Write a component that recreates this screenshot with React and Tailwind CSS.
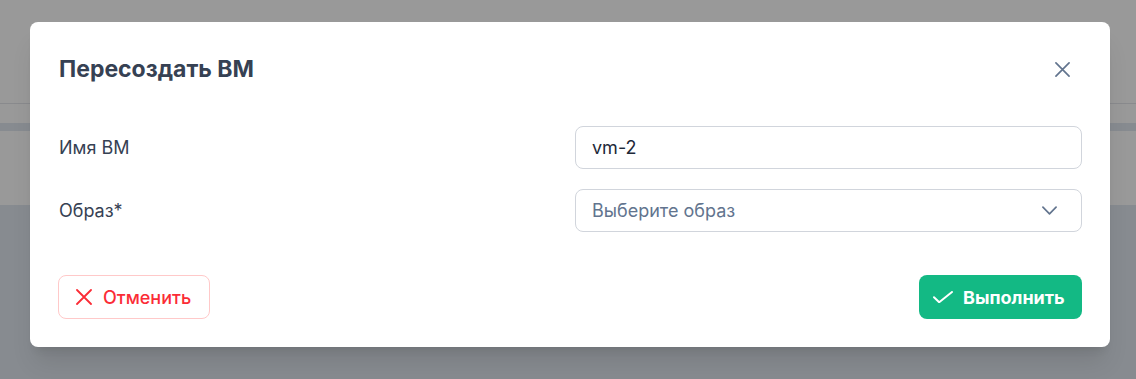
import React from "react";

function XIcon({ className }) {
  return (
    <svg viewBox="0 0 16 16" className={className} fill="none" stroke="currentColor" strokeWidth="1.8" strokeLinecap="round">
      <path d="M1 1l14 14M15 1L1 15" />
    </svg>
  );
}

function CheckIcon({ className }) {
  return (
    <svg viewBox="0 0 20 12" className={className} fill="none" stroke="currentColor" strokeWidth="2" strokeLinecap="round" strokeLinejoin="round">
      <path d="M1 6.2l5.2 5L19 1" />
    </svg>
  );
}

function ChevronIcon({ className }) {
  return (
    <svg viewBox="0 0 16 9" className={className} fill="none" stroke="currentColor" strokeWidth="1.8" strokeLinecap="round" strokeLinejoin="round">
      <path d="M1 1l7 7 7-7" />
    </svg>
  );
}

function Backdrop() {
  return (
    <div className="h-[379px] w-full flex flex-col bg-[#e2e8f0]">
      <div className="h-[104px] bg-white border-b border-[#e5e7eb] flex justify-center">
        <div className="mt-[17px] ml-[20px] flex gap-[40px] text-[18px] font-medium text-gray-800">
          <span>1</span>
          <span>2 3</span>
        </div>
      </div>
      <div className="h-[19px] bg-white" />
      <div className="h-[8px] bg-[#e2e8f0]" />
      <div className="h-[74px] bg-white" />
      <div className="flex-1 bg-[#e2e8f0]" />
    </div>
  );
}

export default function App() {
  return (
    <div
      className="relative w-full h-[379px] overflow-hidden"
      style={{ fontFamily: "Inter, 'Noto Sans', sans-serif" }}
    >
      <Backdrop />
      <div className="absolute inset-0 bg-black/40" />
      <div className="absolute left-[30px] top-[22px] w-[1080px] bg-white rounded-lg shadow-xl px-7 pt-[33px] pb-7">
        <div className="flex items-center justify-between h-[28px]">
          <h2 className="text-[23px] font-bold text-gray-700 pl-px">Пересоздать ВМ</h2>
          <button className="text-slate-500 mr-[12px]">
            <XIcon className="w-[15px] h-[15px]" />
          </button>
        </div>

        <div className="mt-[43px] grid grid-cols-2 gap-x-[10px] gap-y-5 items-center">
          <label className="text-[18px] text-gray-700 pl-px">Имя ВМ</label>
          <div className="h-[43px] rounded-lg border border-gray-300 flex items-center px-4 text-[18px] text-gray-800">
            vm-2
          </div>
          <label className="text-[18px] text-gray-700 pl-px">Образ*</label>
          <div className="h-[43px] rounded-lg border border-gray-300 flex items-center justify-between pl-4 pr-[24px] text-[18px] text-slate-500">
            <span>Выберите образ</span>
            <ChevronIcon className="w-[15px] h-[9px]" />
          </div>
        </div>

        <div className="mt-[43px] flex items-center justify-between">
          <button className="h-[44px] w-[152px] rounded-lg border border-red-200 text-red-500 flex items-center gap-[11px] pl-[17px] text-[18px] font-medium">
            <XIcon className="w-[16px] h-[16px]" />
            Отменить
          </button>
          <button className="h-[44px] w-[163px] rounded-lg bg-[#13b984] text-white flex items-center gap-[10px] pl-[14px] text-[18px] font-bold">
            <CheckIcon className="w-[20px] h-[12px]" />
            Выполнить
          </button>
        </div>
      </div>
    </div>
  );
}
